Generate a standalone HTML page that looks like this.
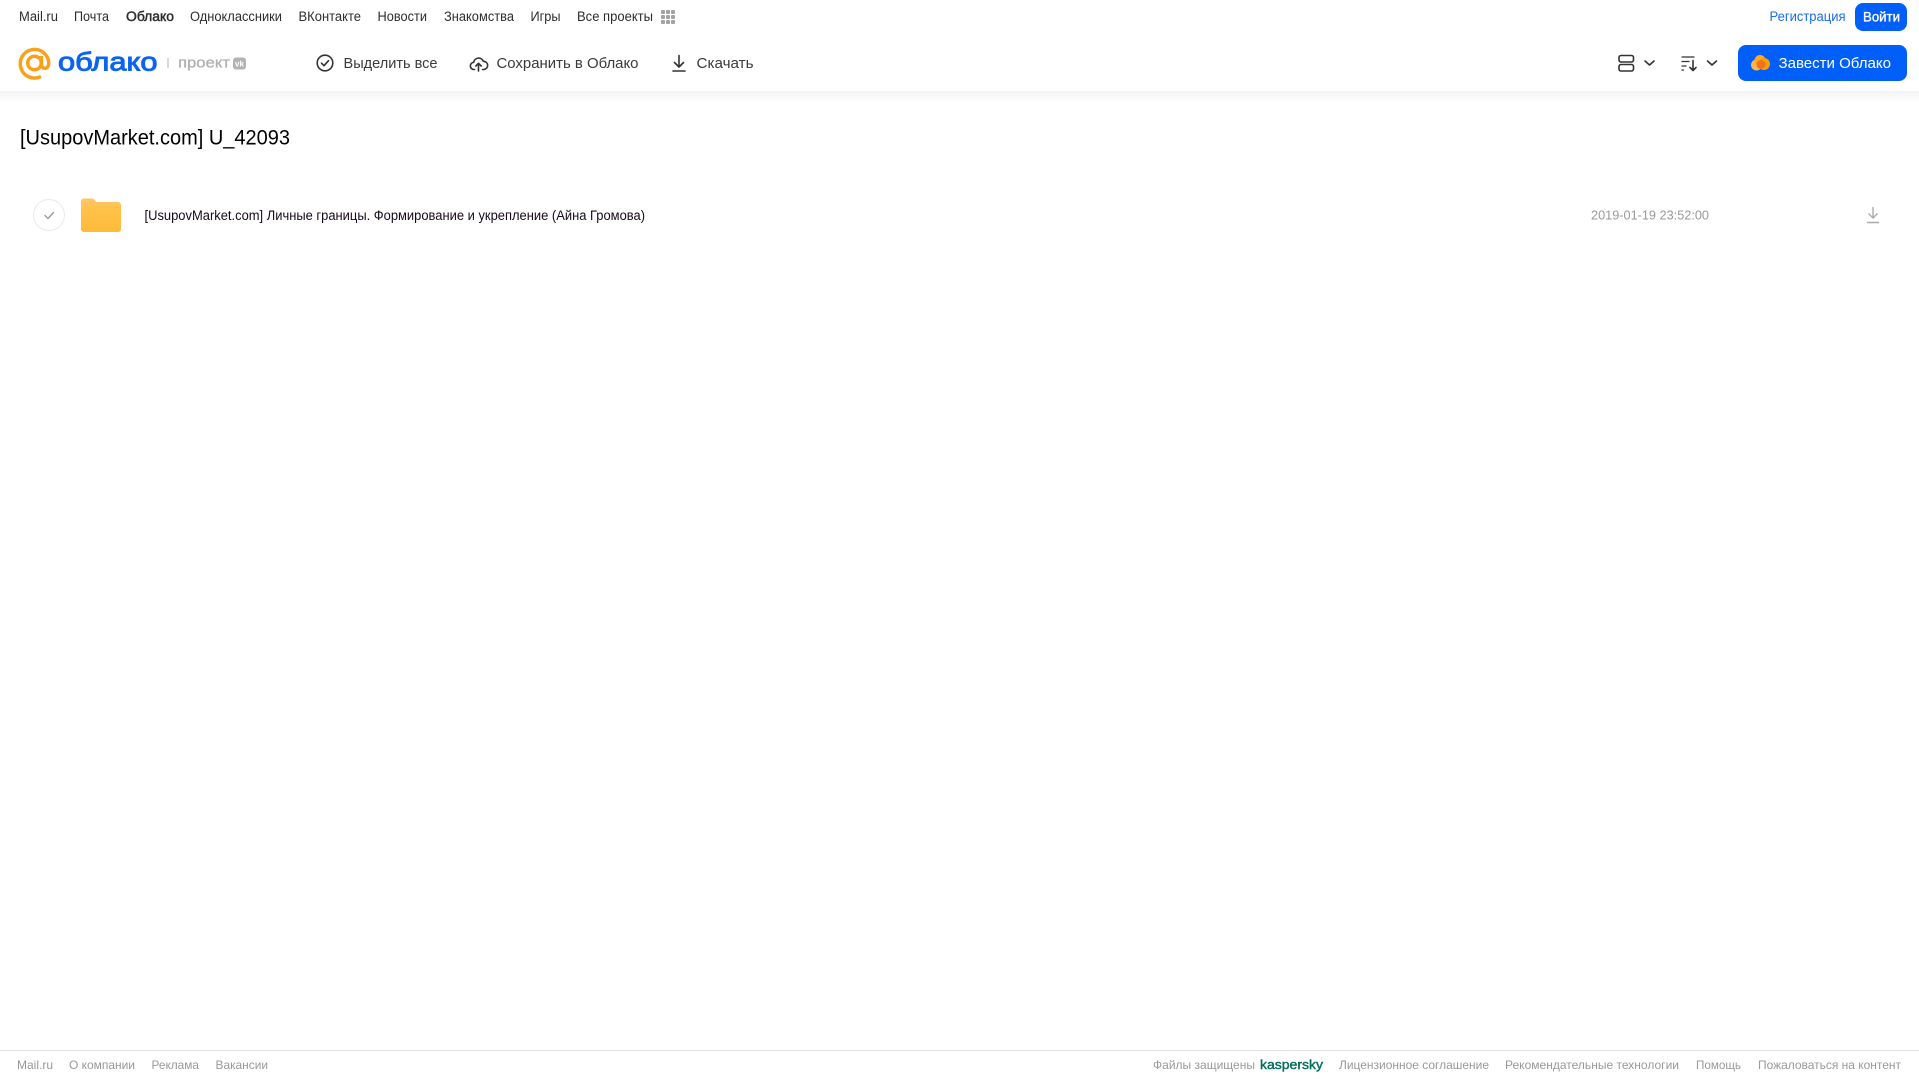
<!DOCTYPE html>
<html lang="ru">
<head>
<meta charset="utf-8">
<title>Облако</title>
<style>
html,body{margin:0;padding:0;width:1919px;height:1079px;overflow:hidden;background:#fff}
svg{display:block}
text{font-family:"Liberation Sans",Arial,sans-serif;dominant-baseline:auto}
.n{font-size:13.500px;fill:#2c2d2e}
.a{font-size:15px;fill:#3a3a3a}
.f{font-size:12px;fill:#999}
</style>
</head>
<body>
<svg width="1919" height="1079" viewBox="0 0 1919 1079" xmlns="http://www.w3.org/2000/svg">
<defs>
<linearGradient id="sh" x1="0" y1="0" x2="0" y2="1"><stop offset="0" stop-color="#f3f3f3"/><stop offset="1" stop-color="#fff"/></linearGradient>
<linearGradient id="fo" x1="0" y1="0" x2="0" y2="1"><stop offset="0" stop-color="#ffc34d"/><stop offset="1" stop-color="#ffbb38"/></linearGradient>
</defs>
<rect width="1919" height="1079" fill="#fff"/>
<rect x="0" y="91" width="1919" height="12" fill="url(#sh)"/>

<!-- top nav -->
<g class="nav">
<text class="n" x="19" y="21" textLength="39" lengthAdjust="spacingAndGlyphs">Mail.ru</text>
<text class="n" x="74" y="21" textLength="35" lengthAdjust="spacingAndGlyphs">Почта</text>
<text class="n" x="126" y="21" textLength="48" lengthAdjust="spacingAndGlyphs" stroke="#2c2d2e" stroke-width=".45">Облако</text>
<text class="n" x="190" y="21" textLength="92" lengthAdjust="spacingAndGlyphs">Одноклассники</text>
<text class="n" x="298.500" y="21" textLength="62.500" lengthAdjust="spacingAndGlyphs">ВКонтакте</text>
<text class="n" x="377.500" y="21" textLength="49.500" lengthAdjust="spacingAndGlyphs">Новости</text>
<text class="n" x="444" y="21" textLength="70" lengthAdjust="spacingAndGlyphs">Знакомства</text>
<text class="n" x="530.500" y="21" textLength="30" lengthAdjust="spacingAndGlyphs">Игры</text>
<text class="n" x="577" y="21" textLength="76" lengthAdjust="spacingAndGlyphs">Все проекты</text>
<g fill="#a3a3a3">
<rect x="661" y="10" width="4" height="4" rx="1"/><rect x="666" y="10" width="4" height="4" rx="1"/><rect x="671" y="10" width="4" height="4" rx="1"/>
<rect x="661" y="15" width="4" height="4" rx="1"/><rect x="666" y="15" width="4" height="4" rx="1"/><rect x="671" y="15" width="4" height="4" rx="1"/>
<rect x="661" y="20" width="4" height="4" rx="1"/><rect x="666" y="20" width="4" height="4" rx="1"/><rect x="671" y="20" width="4" height="4" rx="1"/>
</g>
<text x="1769.500" y="21" font-size="13.500" fill="#1a6ee8" textLength="76" lengthAdjust="spacingAndGlyphs">Регистрация</text>
<rect x="1855" y="3" width="52" height="28" rx="8" fill="#005ff9"/>
<text x="1863" y="21.500" font-size="13.500" fill="#fff" stroke="#fff" stroke-width=".35" textLength="37" lengthAdjust="spacingAndGlyphs">Войти</text>
</g>

<!-- logo -->
<g fill="none" stroke="#f9a11b" stroke-width="3.500">
<circle cx="34.500" cy="63" r="6.800"/>
<path d="M41 76.500 A14.300 14.300 0 1 1 48.800 63 c0 3 -1.500 5.300 -3.600 5.300 c-2.400 0 -3.800 -1.800 -3.800 -4 V56"/>
</g>
<text x="58" y="70.500" font-size="26" fill="#0a64f0" stroke="#0a64f0" stroke-width=".9" textLength="99.500" lengthAdjust="spacingAndGlyphs">облако</text>
<rect x="167.500" y="58" width="1" height="10" fill="#b5b5b5"/>
<text x="178" y="67.500" font-size="15" fill="#b0b0b0" stroke="#b0b0b0" stroke-width=".3" textLength="52" lengthAdjust="spacingAndGlyphs">проект</text>
<rect x="233" y="57.500" width="13" height="12" rx="3" fill="#b3b3b3"/>
<text x="235" y="66.500" font-size="8" font-weight="700" fill="#fff" textLength="9" lengthAdjust="spacingAndGlyphs">vk</text>

<!-- actions -->
<g fill="none" stroke="#333" stroke-width="1.600" stroke-linecap="round" stroke-linejoin="round">
<circle cx="325" cy="63" r="7.800"/>
<path d="M321.500 63.200l2.500 2.500 4.500-5"/>
<path d="M474.500 69.500h-.3a3.600 3.600 0 0 1-.5-7.200 5 5 0 0 1 9.600-1 4.100 4.100 0 0 1 .5 8.200h-1.300"/>
<path d="M478.500 71v-7.500M475.800 66l2.700-2.700 2.700 2.700"/>
<path d="M679 55.500v11M674.500 62.500l4.500 4.500 4.500-4.500M673 71h12"/>
</g>
<text class="a" x="343.500" y="68" textLength="94" lengthAdjust="spacingAndGlyphs">Выделить все</text>
<text class="a" x="496.500" y="68" textLength="142" lengthAdjust="spacingAndGlyphs">Сохранить в Облако</text>
<text class="a" x="696.500" y="68" textLength="57" lengthAdjust="spacingAndGlyphs">Скачать</text>

<!-- right controls -->
<g fill="none" stroke="#333" stroke-width="1.600" stroke-linecap="round" stroke-linejoin="round">
<rect x="1619" y="55.500" width="14.500" height="6.500" rx="2"/>
<rect x="1619" y="64.500" width="14.500" height="6.500" rx="2"/>
<path d="M1645 61l4.500 4 4.500-4"/>
<path d="M1682 57h12M1682 61.500h7M1682 66h4M1682 70h1.500" stroke-width="1.300"/>
<path d="M1693 60.500v9.500M1690 67.500l3 3 3-3"/>
<path d="M1707.500 61l4.500 4 4.500-4"/>
</g>
<rect x="1738" y="45" width="169" height="36" rx="8" fill="#005ff9"/>
<circle cx="1756.500" cy="65" r="5.500" fill="#ffb54a"/>
<circle cx="1760" cy="60.500" r="5.500" fill="#ffa726"/>
<circle cx="1764" cy="64" r="6" fill="#ff9e00"/>
<circle cx="1761" cy="64.500" r="4.500" fill="#f4711e"/>
<text x="1778.500" y="68" font-size="15" fill="#fff" textLength="112.500" lengthAdjust="spacingAndGlyphs">Завести Облако</text>

<!-- title -->
<text x="20" y="144.500" font-size="21" fill="#000" textLength="270" lengthAdjust="spacingAndGlyphs">[UsupovMarket.com] U_42093</text>

<!-- row -->
<circle cx="49" cy="215" r="15.500" fill="#fff" stroke="#eaeaea"/>
<path d="M45 215.500l3 3 5.500-6" fill="none" stroke="#999" stroke-width="1.300" stroke-linecap="round" stroke-linejoin="round"/>
<path d="M81 201.500a3 3 0 0 1 3-3h7.500c2 0 3 1 4 2.500l1 1H118a3 3 0 0 1 3 3V229a3 3 0 0 1-3 3H84a3 3 0 0 1-3-3z" fill="#ffc45e"/>
<path d="M81 206h40v23a3 3 0 0 1-3 3H84a3 3 0 0 1-3-3z" fill="url(#fo)"/>
<text x="144.500" y="220" font-size="13.500" fill="#150a1e" textLength="500.500" lengthAdjust="spacingAndGlyphs">[UsupovMarket.com] Личные границы. Формирование и укрепление (Айна Громова)</text>
<text x="1591" y="219.500" font-size="13" fill="#999" textLength="118" lengthAdjust="spacingAndGlyphs">2019-01-19 23:52:00</text>
<path d="M1873 207v11M1868.500 213.500l4.500 4.500 4.500-4.500M1867 222.500h12" fill="none" stroke="#aaa" stroke-width="1.400"/>

<!-- footer -->
<rect x="0" y="1050" width="1919" height="1" fill="#ddd"/>
<text class="f" x="17" y="1069" textLength="36" lengthAdjust="spacingAndGlyphs">Mail.ru</text>
<text class="f" x="69" y="1069" textLength="66" lengthAdjust="spacingAndGlyphs">О компании</text>
<text class="f" x="151.500" y="1069" textLength="47.500" lengthAdjust="spacingAndGlyphs">Реклама</text>
<text class="f" x="215.500" y="1069" textLength="52.500" lengthAdjust="spacingAndGlyphs">Вакансии</text>
<text class="f" x="1153" y="1069" textLength="102" lengthAdjust="spacingAndGlyphs">Файлы защищены</text>
<text x="1260" y="1069" font-size="13" fill="#006d5c" stroke="#006d5c" stroke-width=".4" textLength="63" lengthAdjust="spacingAndGlyphs">kaspersky</text>
<text class="f" x="1339" y="1069" textLength="150" lengthAdjust="spacingAndGlyphs">Лицензионное соглашение</text>
<text class="f" x="1505" y="1069" textLength="174" lengthAdjust="spacingAndGlyphs">Рекомендательные технологии</text>
<text class="f" x="1696" y="1069" textLength="45" lengthAdjust="spacingAndGlyphs">Помощь</text>
<text class="f" x="1758" y="1069" textLength="143" lengthAdjust="spacingAndGlyphs">Пожаловаться на контент</text>
</svg>
</body>
</html>
